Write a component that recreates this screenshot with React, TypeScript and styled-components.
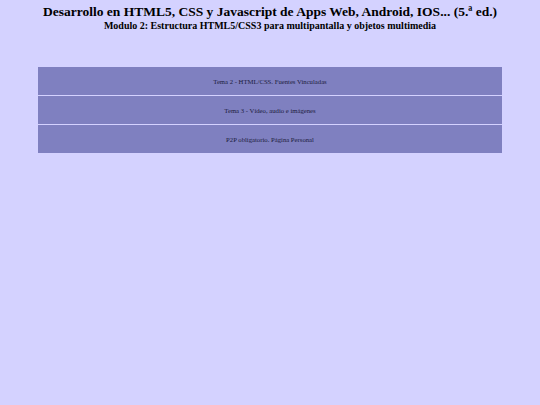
import React from "react";
import styled, { createGlobalStyle } from "styled-components";

const GlobalStyle = createGlobalStyle`
  html, body {
    margin: 0;
    padding: 0;
    background: #d4d2ff;
  }
  body {
    font-family: "Liberation Serif", "Times New Roman", serif;
    color: #000;
  }
`;

const Page = styled.div`
  width: 540px;
  min-height: 405px;
  background: #d4d2ff;
`;

const Header = styled.header`
  padding-top: 4px;
  text-align: center;
`;

const Title = styled.h1`
  margin: 0;
  font-size: 13.5px;
  line-height: 16px;
  font-weight: 700;
`;

const Subtitle = styled.h2`
  margin: 0;
  font-size: 10px;
  line-height: 12px;
  font-weight: 700;
`;

const TopicList = styled.ul`
  list-style: none;
  margin: 35px 38px 0 38px;
  padding: 0;
  display: flex;
  flex-direction: column;
  gap: 1px;
`;

const Topic = styled.li`
  height: 28px;
  background: #7f80c0;
  display: flex;
  align-items: center;
  justify-content: center;
  font-size: 6.7px;
  color: #1c1c3c;
`;

const topics = [
  "Tema 2 - HTML/CSS. Fuentes Vinculadas",
  "Tema 3 - Vídeo, audio e imágenes",
  "P2P obligatorio. Página Personal",
];

export default function App() {
  return (
    <Page>
      <GlobalStyle />
      <Header>
        <Title>
          Desarrollo en HTML5, CSS y Javascript de Apps Web, Android, IOS... (5.ª ed.)
        </Title>
        <Subtitle>
          Modulo 2: Estructura HTML5/CSS3 para multipantalla y objetos multimedia
        </Subtitle>
      </Header>
      <TopicList>
        {topics.map((t) => (
          <Topic key={t}>{t}</Topic>
        ))}
      </TopicList>
    </Page>
  );
}
